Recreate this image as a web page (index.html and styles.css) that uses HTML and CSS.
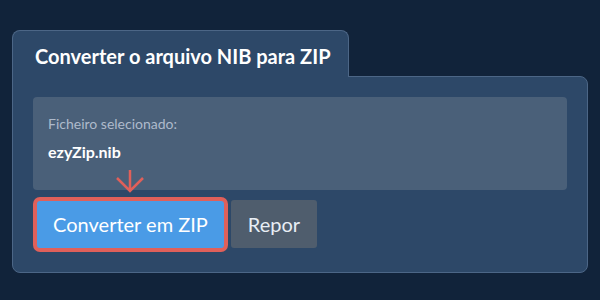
FILE: index.html
```html
<!DOCTYPE html>
<html lang="pt">

<head>
    <meta charset="UTF-8">
    <meta name="viewport" content="width=device-width, initial-scale=1.0">
    <title>Converter NIB para ZIP</title>
    <link rel="stylesheet" href="styles.css">
</head>

<body>
    <div class="converter">
        <div class="converter-tab">
            <h1 class="converter-title">Converter o arquivo NIB para ZIP</h1>
        </div>

        <div class="converter-panel">
            <div class="file-info">
                <div class="file-label">Ficheiro selecionado:</div>
                <div class="file-name">ezyZip.nib</div>
                <!-- seta indicando o botão -->
                <svg class="hint-arrow" width="30" height="24" viewBox="0 0 30 24">
                    <path d="M14 0 V21 M1 8 L14 21 L27 8" fill="none" stroke="#e0605a" stroke-width="2.5" />
                </svg>
            </div>

            <div class="actions">
                <button class="btn btn-convert">Converter em ZIP</button>
                <button class="btn btn-reset">Repor</button>
            </div>
        </div>
    </div>
</body>

</html>
```

FILE: styles.css
```css
* {
    margin: 0;
    padding: 0;
    box-sizing: border-box;
}

body {
    font-family: Lato, 'Noto Sans', sans-serif;
    background: #11233a;
    min-height: 100vh;
    color: #fff;
}

.converter {
    width: 576px;
    padding-top: 30px;
    margin-left: 12px;
}

.converter-tab {
    width: 337px;
    height: 47px;
    background: #2d4868;
    border: 1px solid #4c6686;
    border-bottom: none;
    border-radius: 8px 8px 0 0;
    padding: 12px 0 0 22px;
    position: relative;
    z-index: 1;
}

.converter-title {
    font-size: 20px;
    font-weight: 700;
    line-height: 26px;
    color: #fff;
}

.converter-panel {
    height: 197px;
    margin-top: -1px;
    background: #2d4868;
    border: 1px solid #4c6686;
    border-radius: 0 8px 8px 8px;
    padding: 20px 20px 0 20px;
}

.file-info {
    height: 93px;
    background: #4a6079;
    border-radius: 4px;
    padding: 17px 15px 0 15px;
    position: relative;
}

.file-label {
    font-size: 14px;
    line-height: 20px;
    color: #aebacb;
}

.file-name {
    margin-top: 8px;
    font-size: 16px;
    font-weight: 700;
    line-height: 20px;
    color: #fff;
}

.hint-arrow {
    position: absolute;
    left: 83px;
    top: 73px;
}

.actions {
    display: flex;
    align-items: center;
    gap: 7px;
    margin-top: 10px;
    padding-left: 4px;
}

.btn {
    font-family: Lato, 'Noto Sans', sans-serif;
    font-size: 20px;
    border: none;
    border-radius: 3px;
    color: #fff;
    cursor: pointer;
}

.btn-convert {
    width: 187px;
    height: 47px;
    background: #4a9be6;
    box-shadow: 0 0 0 4px #e0605a;
}

.btn-reset {
    width: 86px;
    height: 48px;
    background: #4f5d6d;
    color: #e8eef5;
}
```
